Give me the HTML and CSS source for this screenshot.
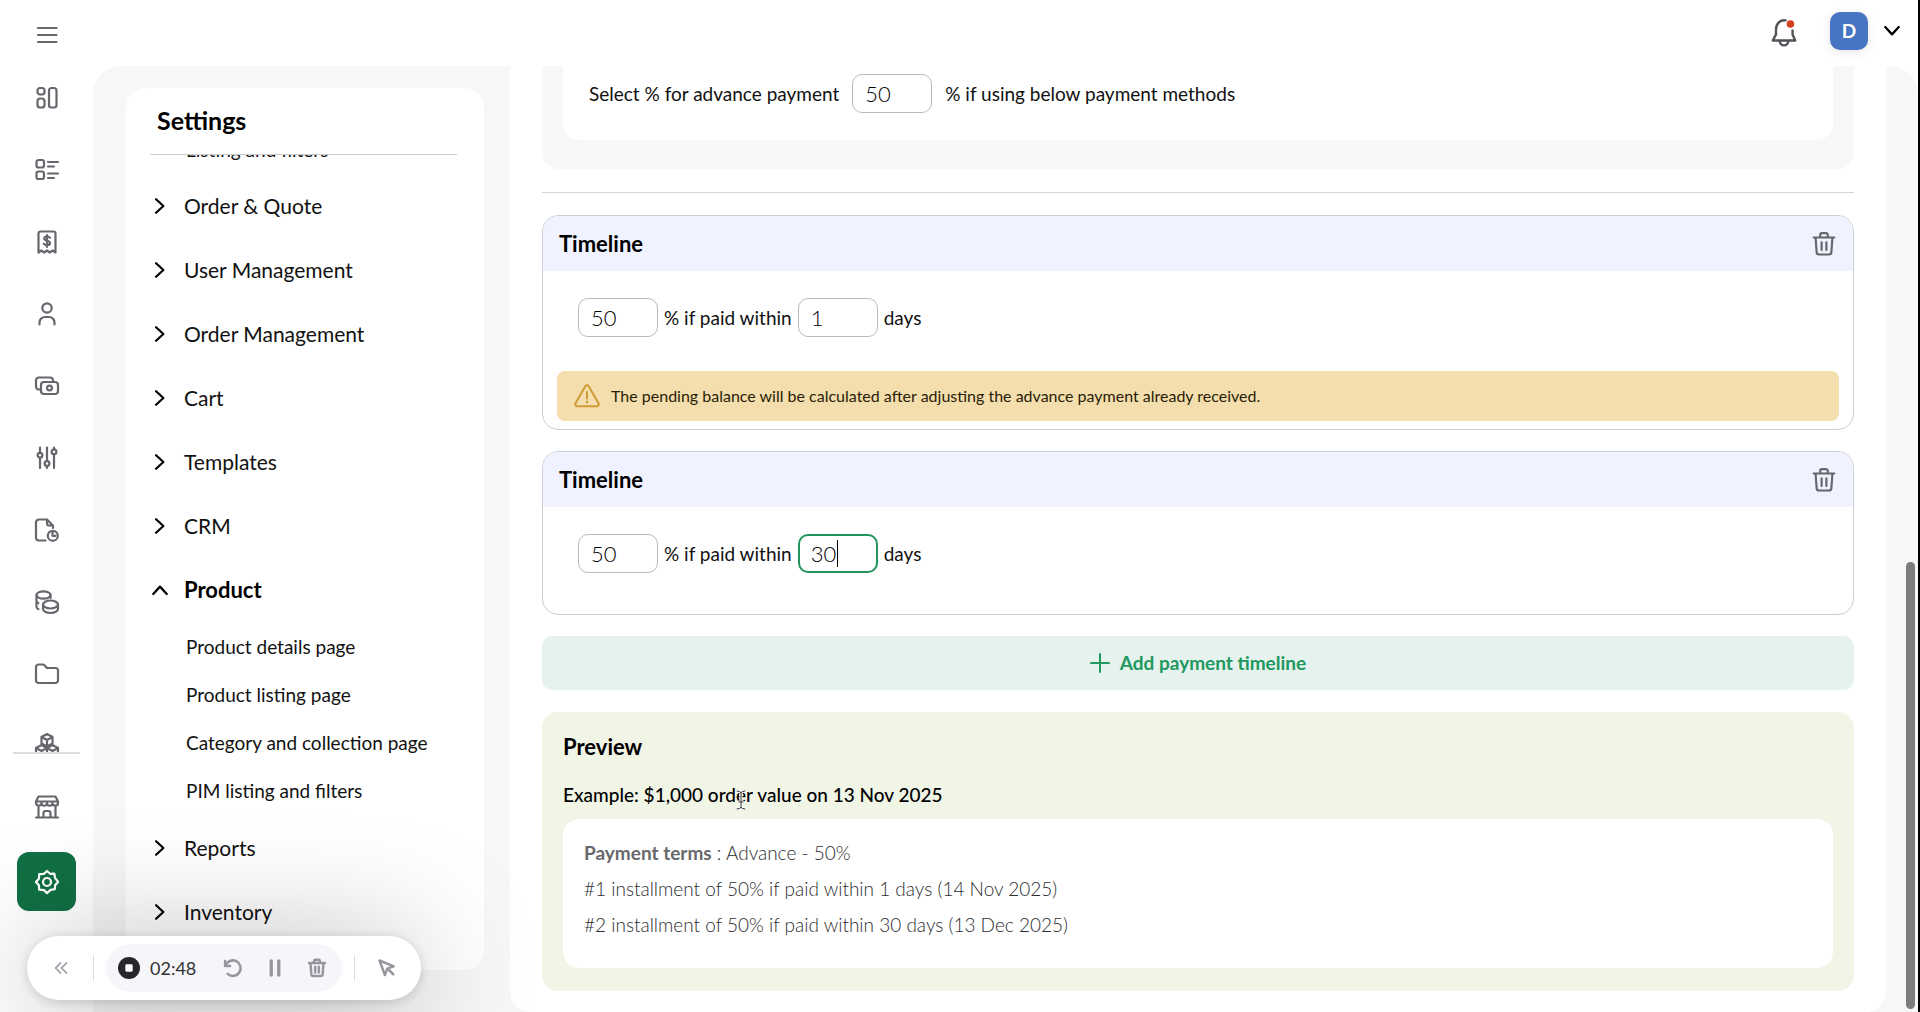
FILE: index.html
```html
<!DOCTYPE html>
<html lang="en">
<head>
<meta charset="utf-8">
<meta name="viewport" content="width=device-width, initial-scale=1">
<title>Settings</title>
<link rel="stylesheet" href="styles.css">
</head>
<body>
<svg class="sprite" aria-hidden="true">
  <symbol id="chevron" viewBox="0 0 16 16"><path d="M4.500 2 11 8 4.500 14"/></symbol>
  <symbol id="trash" viewBox="0 0 24 24"><path d="M2.500 6h19M4.200 6l1 13.500a2.300 2.300 0 0 0 2.300 2.200h9a2.300 2.300 0 0 0 2.300-2.200L19.800 6M8.500 6V3.500a1.500 1.500 0 0 1 1.500-1.500h4a1.500 1.500 0 0 1 1.500 1.500V6M9.800 10.500v7M14.200 10.500v7"/></symbol>
</svg>
<div class="app">
  <nav class="rail" aria-label="Main">
    <button class="rail-item menu" aria-label="Menu"><svg viewBox="0 0 24 24"><path d="M3 5h18.500M3 12h18.500M3 19h18.500"/></svg></button>
    <div class="rail-list">
      <a href="#" class="rail-item" aria-label="Dashboard"><svg viewBox="0 0 24 24"><rect x="2.500" y="2" width="7" height="6.500" rx="2.500"/><rect x="2.500" y="12.500" width="7" height="9" rx="2.800"/><rect x="14" y="2" width="7.500" height="19.500" rx="2.500"/></svg></a>
      <a href="#" class="rail-item" aria-label="Catalog"><svg viewBox="0 0 24 24"><rect x="1.500" y="2" width="7.500" height="7.500" rx="2"/><rect x="1.500" y="13.500" width="7.500" height="7.500" rx="2"/><path d="M13 4h10M13 8.500h6M13 15.500h10M13 20h6"/></svg></a>
      <a href="#" class="rail-item" aria-label="Invoices"><svg viewBox="0 0 24 24"><path d="M3.500 22.500V3.500a2 2 0 0 1 2-2h13a2 2 0 0 1 2 2v19l-2.800-2-2.900 2-2.800-2-2.800 2-2.900-2zM15 7.800c-.6-1-1.600-1.300-3-1.300-1.700 0-2.800.8-2.800 2.100 0 3 5.800 1.200 5.800 4.400 0 1.400-1.200 2.200-3 2.200-1.500 0-2.600-.5-3.200-1.500M12 5v12"/></svg></a>
      <a href="#" class="rail-item" aria-label="Customers"><svg viewBox="0 0 24 24"><circle cx="12" cy="6" r="4.700"/><path d="M4.500 22.500v-2a5.500 5.500 0 0 1 5.500-5.500h4a5.500 5.500 0 0 1 5.500 5.500v2"/></svg></a>
      <a href="#" class="rail-item" aria-label="Payments"><svg viewBox="0 0 24 24"><rect x="6" y="8" width="17" height="12" rx="3"/><path d="M6 15.500H4A3 3 0 0 1 1 12.500V6.500a3 3 0 0 1 3-3h11a3 3 0 0 1 3 3V8"/><circle cx="14.500" cy="14" r="2.400"/></svg></a>
      <a href="#" class="rail-item" aria-label="Controls"><svg viewBox="0 0 24 24"><path d="M5 1.500V7M5 11.500v10.500M12 1.500v13.500M12 20v2M19 1.500v2M19 8v14"/><circle cx="5" cy="9.200" r="2.400"/><circle cx="12" cy="17.500" r="2.400"/><circle cx="19" cy="5.800" r="2.400"/></svg></a>
      <a href="#" class="rail-item" aria-label="Reports"><svg viewBox="0 0 24 24"><path d="M10.500 22.500H4a3 3 0 0 1-3-3v-15a3 3 0 0 1 3-3h8l6 6v2.500M12 1.500v4a2 2 0 0 0 2 2h4"/><circle cx="17.800" cy="17.800" r="5"/><path d="M17.500 14.500v3.300h3"/></svg></a>
      <a href="#" class="rail-item" aria-label="Pricing"><svg viewBox="0 0 24 24"><ellipse cx="8.500" cy="5" rx="7" ry="3.700"/><path d="M1.500 5v12c0 1 .8 1.700 2 2.200M1.500 11c0 .9.600 1.500 1.800 2"/><ellipse cx="15.500" cy="14.500" rx="7.500" ry="4"/><path d="M8 14.500V19c0 2.200 3.300 4 7.500 4s7.500-1.800 7.500-4v-4.500M15.500 8V5"/></svg></a>
      <a href="#" class="rail-item" aria-label="Files"><svg viewBox="0 0 24 24"><path d="M1 18.500V5a2.500 2.500 0 0 1 2.500-2.500h4.200c.8 0 1.500.3 2 .9L12 6h8.500A2.500 2.500 0 0 1 23 8.500v10a2.500 2.500 0 0 1-2.500 2.500h-17A2.500 2.500 0 0 1 1 18.500z"/></svg></a>
      <a href="#" class="rail-item" aria-label="Inventory"><svg viewBox="0 0 24 24"><path d="m12 0 5.500 3v6.500L12 12.500 6.500 9.500V3zM6.500 3l5.500 3 5.500-3M12 6v16M6.500 11l5.500 3v7l-5.500 3-5.500-3v-7zM17.500 11l5.500 3v7l-5.500 3-5.500-3v-7zM1 14l5.500 3 5.500-3 5.500 3 5.500-3M6.500 17v6M17.500 17v6"/></svg></a>
    </div>
    <a href="#" class="rail-item store" aria-label="Store"><svg viewBox="0 0 24 24"><path d="M3.500 1.500h17L23 6.500v1.300a2.700 2.700 0 0 1-5.500.2 2.700 2.700 0 0 1-5.500 0 2.700 2.700 0 0 1-5.500 0A2.700 2.700 0 0 1 1 7.800V6.500zM1 6.500h22M3.500 11v11.500M20.500 11v11.500M1 22.500h22M8.500 22.500V18a2 2 0 0 1 2-2h3a2 2 0 0 1 2 2v4.500"/></svg></a>
    <a href="#" class="rail-item active" aria-label="Settings" aria-current="page"><svg viewBox="0 0 24 24"><path d="m12 1 3.100 2.800 4.200-.1.700 4.100L23.100 11.900 20.200 15l-.4 4.200-4.200.7L12 23.100l-3.100-3-4.700-.4-.3-4.500L.9 12l3-3.300.3-4.500 4.600-.3z"/><circle cx="12" cy="12" r="4"/></svg></a>
  </nav>

  <div class="page">
    <header class="topbar">
      <button class="icon-btn" aria-label="Notifications"><svg class="bell" viewBox="0 0 24 28"><path d="M13.500 2.200C8 1.500 4.500 5.500 4.500 11v4.500L1.500 21h21l-2.500-5.500v-4"/><path d="M8 21.500a4 4 0 0 0 8 0"/><circle class="dot" cx="18" cy="5.500" r="3.500"/></svg></button>
      <button class="avatar" aria-label="Account">D</button>
      <button class="icon-btn" aria-label="Open account menu"><svg class="caret-down" viewBox="0 0 16 16"><use href="#chevron"/></svg></button>
    </header>

    <div class="workspace">
      <aside class="settings">
        <h1>Settings</h1>
        <div class="settings-scroll">
          <ul class="sections">
            <li><ul class="pages previous"><li><a href="#">Listing and filters</a></li></ul></li>
            <li><button><svg><use href="#chevron"/></svg>Order &amp; Quote</button></li>
            <li><button><svg><use href="#chevron"/></svg>User Management</button></li>
            <li><button><svg><use href="#chevron"/></svg>Order Management</button></li>
            <li><button><svg><use href="#chevron"/></svg>Cart</button></li>
            <li><button><svg><use href="#chevron"/></svg>Templates</button></li>
            <li><button><svg><use href="#chevron"/></svg>CRM</button></li>
            <li><button class="open" aria-expanded="true"><svg><use href="#chevron"/></svg>Product</button>
              <ul class="pages">
                <li><a href="#">Product details page</a></li>
                <li><a href="#">Product listing page</a></li>
                <li><a href="#">Category and collection page</a></li>
                <li><a href="#">PIM listing and filters</a></li>
              </ul>
            </li>
            <li><button><svg><use href="#chevron"/></svg>Reports</button></li>
            <li><button><svg><use href="#chevron"/></svg>Inventory</button></li>
          </ul>
        </div>
      </aside>

      <main class="panel">
        <section class="advance">
          <div class="advance-inner">
            <label for="advance">Select % for advance payment</label>
            <input id="advance" type="text" value="50">
            <span>% if using below payment methods</span>
          </div>
        </section>
        <hr>
        <section class="timeline">
          <header><h2>Timeline</h2><button aria-label="Delete timeline 1"><svg><use href="#trash"/></svg></button></header>
          <div class="terms">
            <input id="pct1" type="text" value="50">
            <label for="pct1">% if paid within</label>
            <input id="days1" type="text" value="1">
            <label for="days1">days</label>
          </div>
          <p class="notice"><svg viewBox="0 0 26 24"><path d="M11.300 2.200a2 2 0 0 1 3.400 0l9.800 17a2 2 0 0 1-1.700 3H3.200a2 2 0 0 1-1.700-3zM13 8v6.500M13 17.500v1"/></svg>The pending balance will be calculated after adjusting the advance payment already received.</p>
        </section>
        <section class="timeline">
          <header><h2>Timeline</h2><button aria-label="Delete timeline 2"><svg><use href="#trash"/></svg></button></header>
          <div class="terms">
            <input id="pct2" type="text" value="50">
            <label for="pct2">% if paid within</label>
            <span class="editing"><input id="days2" type="text" value="30"><i class="text-caret"></i></span>
            <label for="days2">days</label>
          </div>
        </section>
        <button class="add"><svg viewBox="0 0 20 20"><path d="M10 1v18M1 10h18"/></svg>Add payment timeline</button>
        <section class="preview">
          <h2>Preview</h2>
          <p class="example">Example: $1,000 <span class="hovered">order<svg class="ibeam" viewBox="0 0 10 20"><path class="halo" d="M1 1q4 0 4 2q0-2 4-2M5 3v14M1 19q4 0 4-2q0 2 4 2M3 12h4"/><path d="M1 1q4 0 4 2q0-2 4-2M5 3v14M1 19q4 0 4-2q0 2 4 2M3 12h4"/></svg></span> value on 13 Nov 2025</p>
          <div class="preview-body">
            <p><strong>Payment terms</strong> : Advance - 50%</p>
            <p>#1 installment of 50% if paid within 1 days (14 Nov 2025)</p>
            <p>#2 installment of 50% if paid within 30 days (13 Dec 2025)</p>
          </div>
        </section>
      </main>
      <div class="scroll-thumb"></div>
    </div>
  </div>
</div>

<div class="recorder" role="toolbar" aria-label="Screen recorder">
  <button aria-label="Collapse"><svg viewBox="0 0 24 24"><path d="M11.500 6 5.500 12l6 6M18.500 6l-6 6 6 6"/></svg></button>
  <span class="sep"></span>
  <div class="recorder-main">
    <button aria-label="Stop"><svg class="stop" viewBox="0 0 24 24"><circle cx="12" cy="12" r="12"/><rect x="8" y="8" width="8" height="8" rx="1.500"/></svg></button>
    <time>02:48</time>
    <button aria-label="Restart"><svg class="bold" viewBox="0 0 24 24"><path d="M2.500 3.500v6h6M3 9.300A9.300 9.300 0 1 1 5.500 19"/></svg></button>
    <button aria-label="Pause"><svg class="pause" viewBox="0 0 24 24"><path d="M7.500 3.500v17M16.500 3.500v17"/></svg></button>
    <button aria-label="Discard"><svg class="bold" viewBox="0 0 24 24"><use href="#trash"/></svg></button>
  </div>
  <span class="sep"></span>
  <button aria-label="Pointer"><svg class="bold" viewBox="0 0 24 24"><path d="m3 3 6.500 17.500 2.800-7.700 7.700-2.800zM13 13l6.500 6.500"/></svg></button>
</div>
</body>
</html>
```
FILE: styles.css
```css
* { box-sizing: border-box; }
body {
  margin: 0;
  height: 100vh;
  overflow: hidden;
  background: #fff;
  color: #111;
  font: 19px/24px Lato, "Open Sans", sans-serif;
}
h1, h2, p, ul { margin: 0; padding: 0; }
ul { list-style: none; }
a { color: inherit; text-decoration: none; }
button { padding: 0; border: 0; background: none; color: inherit; font: inherit; cursor: pointer; }
svg { display: block; flex: none; fill: none; stroke: currentColor; stroke-width: 2; stroke-linecap: round; stroke-linejoin: round; }
.sprite { position: absolute; width: 0; height: 0; }

.app { display: flex; height: 100vh; border-right: 2px solid #000; }

/* icon rail */
.rail { flex: none; width: 93px; display: flex; flex-direction: column; align-items: center; color: #65676d; }
.rail-item { flex: none; width: 59px; height: 72px; display: grid; place-items: center; }
.rail-item svg { width: 24px; height: 24px; overflow: visible; stroke-width: 2.2; }
.rail-item.menu { height: 62px; padding-top: 8px; }
.rail-list { height: 692px; width: 67px; display: flex; flex-direction: column; align-items: center; overflow: hidden; border-bottom: 2px solid #dcdde0; }
.rail-item.store { margin-top: 17px; }
.rail-item.active { height: 59px; margin-top: 9px; border-radius: 12px; background: #117043; color: #fff; }

/* top bar */
.page { flex: 1; min-width: 0; display: flex; flex-direction: column; }
.topbar { flex: none; height: 66px; padding: 0 10px 4px 0; display: flex; align-items: center; justify-content: flex-end; }
.icon-btn { width: 32px; display: grid; place-items: center; }
.bell { width: 26px; height: 30px; margin-top: 4px; color: #505257; stroke-width: 2.2; }
.bell .dot { fill: #d3401a; stroke: none; }
.avatar { width: 38px; height: 38px; margin: 0 8px 0 30px; border-radius: 10px; background: #4875c3; color: #fff; font-weight: 700; box-shadow: 0 2px 10px rgba(0, 0, 0, .1); }
.caret-down { width: 18px; height: 18px; color: #000; transform: rotate(90deg); }

/* workspace */
.workspace { flex: 1; min-height: 0; display: flex; background: #f7f7f7; border-radius: 28px 28px 0 0; padding-left: 33px; position: relative; }
.settings { flex: none; width: 358px; margin: 22px 26px 42px 0; padding: 0 27px 0 24px; border-radius: 20px; background: #fff; display: flex; flex-direction: column; overflow: hidden; }
.settings h1 { flex: none; height: 67px; padding: 17px 0 0 7px; border-bottom: 1px solid #ccc; font-size: 25px; line-height: 30px; font-weight: 700; color: #000; }
.settings-scroll { flex: 1; min-height: 0; overflow: hidden; }
.sections button { width: 100%; height: 64px; display: flex; align-items: center; gap: 15px; font-size: 21px; }
.sections button svg { width: 18px; height: 18px; color: #000; margin-left: 1px; }
.sections .open { font-size: 22px; font-weight: 700; color: #000; }
.sections .open svg { transform: rotate(-90deg); }
.pages { padding: 1px 0 1px 36px; }
.pages li { height: 48px; display: flex; align-items: center; }
.pages.previous { margin-top: -29px; padding-top: 0; padding-bottom: 0; }

.panel { flex: 1; min-width: 0; margin-right: 32px; padding: 0 32px; border-radius: 0 0 20px 20px; background: #fff; display: flex; flex-direction: column; }
.panel input { width: 80px; height: 39px; padding: 0 12px; border: 1px solid #b9babd; border-radius: 10px; background: #fff; color: #000; font: inherit; font-size: 22px; font-weight: 300; outline: 0; }
.advance { padding: 0 21px 29px; border-radius: 0 0 16px 16px; background: #f7f7f7; }
.advance-inner { height: 74px; padding: 8px 26px 0; border-radius: 0 0 16px 16px; background: #fff; display: flex; align-items: flex-start; gap: 13px; line-height: 39px; }
.panel hr { width: 100%; height: 1px; margin: 23px 0 22px; border: 0; background: #d6d6d6; }

.timeline { height: 164px; margin-bottom: 21px; border: 1px solid #cdcfd4; border-radius: 16px; overflow: hidden; flex: none; }
.timeline header { height: 55px; padding: 0 16px; display: flex; align-items: center; justify-content: space-between; background: #f0f3ff; }
.timeline header svg { width: 26px; height: 26px; color: #65676d; }
.timeline h2, .preview h2 { font-size: 22px; line-height: 28px; font-weight: 700; color: #000; }
.terms { display: flex; align-items: center; gap: 6px; padding: 27px 35px 26px; }
.timeline:has(.notice) { height: auto; }
.notice { height: 50px; margin: 8px 14px; padding: 0 17px; display: flex; align-items: center; gap: 11px; border-radius: 8px; background: #f4dead; color: #291d06; font-size: 16px; }
.notice svg { width: 26px; height: 24px; color: #cf9a35; }
.editing { position: relative; display: flex; }
.panel .editing input { border: 2px solid #20945c; padding: 0 11px; }
.text-caret { position: absolute; left: 39px; top: 6px; width: 1px; height: 27px; background: #000; }

.add { flex: none; height: 54px; border-radius: 10px; background: #e6f2ed; color: #219860; font-weight: 700; display: flex; align-items: center; justify-content: center; gap: 10px; }
.add svg { width: 20px; height: 20px; }
.preview { margin-top: 22px; padding: 21px 21px 23px; border-radius: 16px; background: #f1f5e6; }
.example { margin: 22px 0 12px; color: #000; font-weight: 500; }
.hovered { position: relative; }
.ibeam { position: absolute; left: 28px; top: 7px; width: 10px; height: 20px; color: #333; stroke-width: 1; }
.ibeam .halo { stroke: #fff; stroke-width: 3; }
.preview-body { height: 149px; padding: 16px 21px; border-radius: 16px; background: #fff; color: #2c2d30; font-weight: 300; line-height: 36px; }
.preview-body strong { font-weight: 700; color: #68696c; }
.scroll-thumb { position: absolute; right: 3px; top: 496px; bottom: 3px; width: 9px; border-radius: 5px; background: #7d7d7d; }

/* floating recorder */
.recorder { position: fixed; left: 27px; bottom: 12px; height: 64px; padding: 0 22px; display: flex; align-items: center; border-radius: 32px; background: #fff; color: #96969f; box-shadow: 0 2px 12px rgba(0, 0, 0, .16), 0 10px 120px rgba(0, 0, 0, .34); }
.recorder button { width: 24px; margin: 0 9px; display: grid; place-items: center; }
.recorder > button { margin: 0; width: 24px; }
.recorder svg { width: 20px; height: 20px; }
.recorder svg.bold { stroke-width: 3; }
.recorder svg.pause { stroke-width: 4; }
.recorder svg.stop { width: 22px; height: 22px; stroke: none; fill: #27262c; }
.recorder .stop rect { fill: #fff; }
.recorder time { width: 62px; color: #333; font-size: 18px; }
.sep { width: 1px; height: 26px; margin: 0 20px; background: #dedee3; }
.recorder-main { display: flex; align-items: center; height: 48px; padding: 0 4px 0 2px; border-radius: 24px; background: #f6f5fa; margin-left: -8px; margin-right: -8px; }
```
